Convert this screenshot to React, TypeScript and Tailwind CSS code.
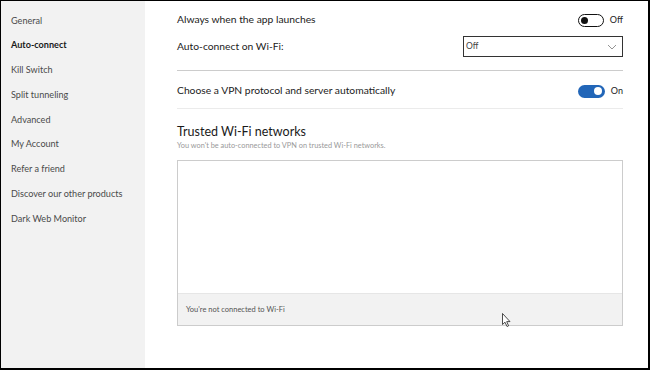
import React from "react";

const items = [
  "General",
  "Auto-connect",
  "Kill Switch",
  "Split tunneling",
  "Advanced",
  "My Account",
  "Refer a friend",
  "Discover our other products",
  "Dark Web Monitor",
];

function Toggle({ on }: { on: boolean }) {
  return on ? (
    <div className="w-[28px] h-[13px] rounded-full bg-[#2266b8] flex items-center justify-end pr-[2.5px]">
      <div className="w-[8px] h-[8px] rounded-full bg-white" />
    </div>
  ) : (
    <div className="w-[28px] h-[13px] rounded-full border-[1.5px] border-[#111] bg-white flex items-center pl-[2px]">
      <div className="w-[7px] h-[7px] rounded-full bg-[#111]" />
    </div>
  );
}

export default function App() {
  return (
    <div
      className="w-[650px] h-[370px] border-t border-l border-r-2 border-b-2 border-black flex bg-white relative overflow-hidden"
      style={{ fontFamily: 'Lato, "Noto Sans", sans-serif' }}
    >
      <div className="w-[144px] h-full bg-[#f2f2f2] pt-[7px] relative">
        {items.map((t, i) => (
          <div
            key={t}
            className={
              "h-[24.75px] flex items-center pl-[10px] text-[9.1px] " +
              (i === 1 ? "font-bold text-[#1a1a1a]" : "text-[#4a4a4a]")
            }
          >
            {t}
          </div>
        ))}
      </div>
      <div className="flex-1 pl-[32px] pr-[25px] pt-[6px] flex flex-col text-[#222]">
        <div className="h-[26px] flex items-center justify-between">
          <span className="text-[10.3px]">Always when the app launches</span>
          <div className="flex items-center gap-[6px] w-[45px]">
            <Toggle on={false} />
            <span className="text-[9px]">Off</span>
          </div>
        </div>
        <div className="mt-[3px] h-[21px] flex items-center justify-between">
          <span className="text-[10.3px]">Auto-connect on Wi-Fi:</span>
          <div className="w-[160px] h-[21px] border border-[#333] flex items-center justify-between pl-[2px] pr-[5px]">
            <span className="text-[8.5px] text-[#444]">Off</span>
            <svg width="10" height="6" viewBox="0 0 10 6">
              <path d="M1 1 L5 5 L9 1" fill="none" stroke="#888" strokeWidth="0.9" />
            </svg>
          </div>
        </div>
        <div className="mt-[13px] h-px bg-[#cccccc]" />
        <div className="mt-[7px] h-[26px] flex items-center justify-between">
          <span className="text-[10.3px]">Choose a VPN protocol and server automatically</span>
          <div className="flex items-center gap-[6px] w-[45px]">
            <Toggle on={true} />
            <span className="text-[9px]">On</span>
          </div>
        </div>
        <div className="mt-[4px] h-px bg-[#ebebeb]" />
        <div className="mt-[15px] h-[16px] flex items-center text-[12.5px] text-[#1a1a1a]">
          Trusted Wi-Fi networks
        </div>
        <div className="h-[10px] flex items-center text-[7.35px] text-[#999]">
          You won't be auto-connected to VPN on trusted Wi-Fi networks.
        </div>
        <div className="mt-[10px] h-[166px] border border-[#cccccc] flex flex-col">
          <div className="flex-1 bg-white" />
          <div className="h-[32px] bg-[#f2f2f2] border-t border-[#e6e6e6] flex items-center pl-[8px] text-[7.5px] text-[#555]">
            You're not connected to Wi-Fi
          </div>
        </div>
      </div>
      <svg
        className="absolute"
        style={{ left: 501, top: 312 }}
        width="10"
        height="15"
        viewBox="0 0 10 15"
      >
        <path
          d="M0.5 0.5 L0.5 11.5 L3 9.2 L5 13.5 L6.6 12.8 L4.7 8.6 L8 8.6 Z"
          fill="white"
          stroke="#222"
          strokeWidth="0.8"
          strokeLinejoin="round"
        />
      </svg>
    </div>
  );
}
